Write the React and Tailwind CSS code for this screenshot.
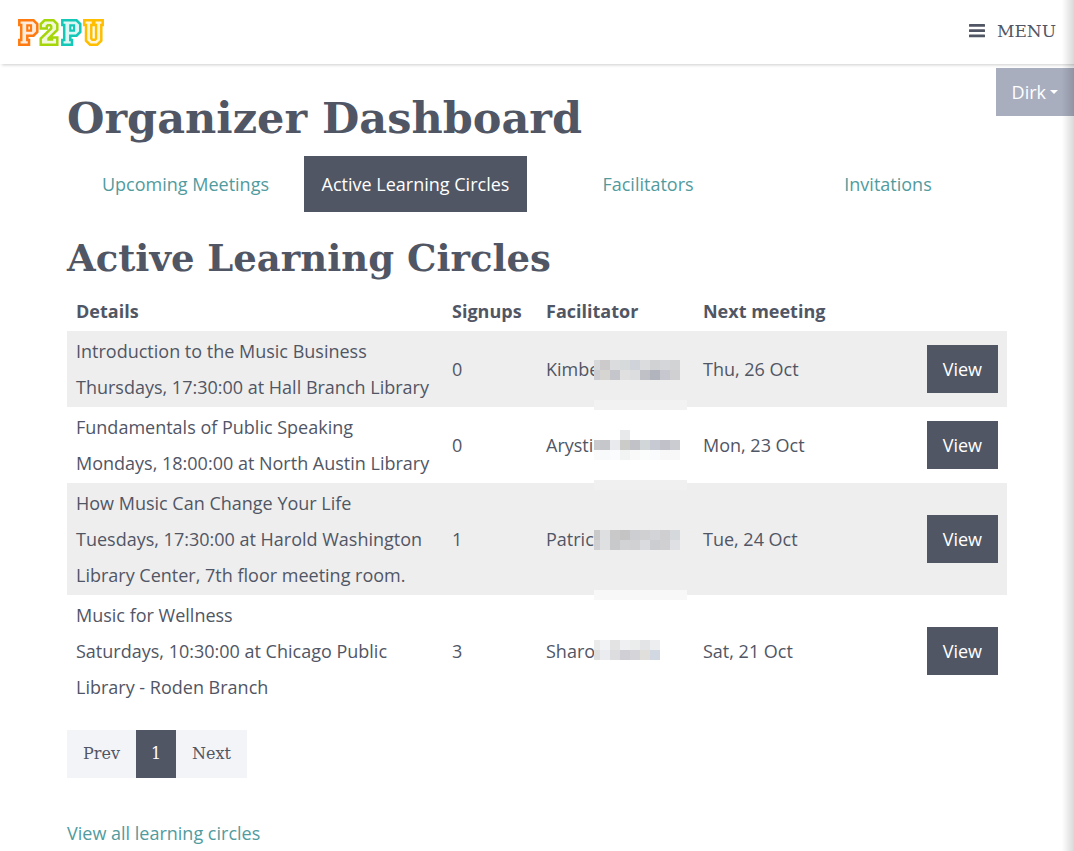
function Logo() {
  const letters = [
    { color: '#ff7a0f', d: 'M1.3 1.3H15.5L19.3 5V13L15.5 16.7H9.3V21H11V25.7H1.3V21H3.2V6H1.3Z', hole: 'M9.3 6.3V11.7H13V6.3Z' },
    { color: '#a5d60a', d: 'M22.7 9.5V5L26.5 1.3H35.5L39.3 5V11L30.5 19.5V20.5H34V18.5H39.3V25.7H22.7V19.5L33.2 9.5V7.2L32.3 6.3H29.8L28.8 7.3V9.5Z' },
    { color: '#14c8b8', d: 'M44.3 1.3H58.5L62.3 5V13L58.5 16.7H52.3V21H54V25.7H44.3V21H46.2V6H44.3Z', hole: 'M52.3 6.3V11.7H56V6.3Z' },
    { color: '#ffbe00', d: 'M66.3 1.3H75V6H73.3V19.5L74.3 20.7H77L78 19.5V6H76.3V1.3H84.7V6H83.3V21.7L79.2 25.7H72L68 21.7V6H66.3Z' },
  ];
  return (
    <svg width="86" height="27" viewBox="0 0 86 27" role="img" aria-label="P2PU">
      {letters.map((l) => (
        <g key={l.color} stroke={l.color} strokeWidth="2.5">
          <path d={l.d} fill={l.color} fillOpacity="0.15" />
          {l.hole && <path d={l.hole} fill="#fff" strokeWidth="2.2" />}
        </g>
      ))}
    </svg>
  );
}

const circles = [
  {
    title: 'Introduction to the Music Business',
    place: 'Thursdays, 17:30:00 at Hall Branch Library',
    signups: 0,
    name: 'Kimbe',
    next: 'Thu, 26 Oct',
    top: 9,
    rows: [
      ['#d7d8da', '#cccaca', '#dbdcde', '#d7dadb', '#d0d4da', '#dbdcde', '#d1d2d4', '#d5d6d9', '#d2d3d5'],
      ['#cccdd3', '#d6d5d2', '#c5c6cc', '#dfe0df', '#dcdddf', '#c0c1c7', '#b1b3bd', '#c7c8cf', '#d0d0d2'],
    ],
    strip: { y: 49, color: '#f2f2f2' },
  },
  {
    title: 'Fundamentals of Public Speaking',
    place: 'Mondays, 18:00:00 at North Austin Library',
    signups: 0,
    name: 'Arysti',
    next: 'Mon, 23 Oct',
    top: 3,
    rows: [
      [null, null, null, '#e8e9eb', null, null, null, null, null],
      ['#c9cacd', '#c6c7cb', '#e9eaed', '#cbccca', '#c1c2c8', '#d1d6d9', '#c7cad2', '#c1c2c9', '#cbccd1'],
      ['#fafafa', '#f8f9fa', '#fafcfe', '#f1f4f3', '#f9f9fa', '#fbfdfd', '#fafbfc', '#f8f8f8', '#f8f8f8'],
    ],
    strip: { y: 53, color: '#f0f0f0' },
  },
  {
    title: 'How Music Can Change Your Life',
    place: 'Tuesdays, 17:30:00 at Harold Washington Library Center, 7th floor meeting room.',
    signups: 1,
    name: 'Patric',
    next: 'Tue, 24 Oct',
    top: 9,
    rows: [
      ['#cac9ca', '#dedfe0', '#c9c9ca', '#c4c4c5', '#cdced2', '#d0d0d3', '#d3d4d8', '#cfcfd1', '#d6d9dc'],
      ['#d0d0d2', '#dfe0e2', '#c8c9cb', '#d2d3d5', '#d1d1d3', '#dadbde', '#cccdd1', '#d0d0d2', '#dfe0e4'],
    ],
    strip: { y: 69, color: '#f8f8f8' },
  },
  {
    title: 'Music for Wellness',
    place: 'Saturdays, 10:30:00 at Chicago Public Library - Roden Branch',
    signups: 3,
    name: 'Sharo',
    next: 'Sat, 21 Oct',
    top: 7,
    rows: [
      ['#ebebeb', '#f2f3f5', '#e3e3e4', '#eff0f2', '#ebecec', '#e3e4e6', '#edeef0'],
      ['#dfe0e0', '#ebecef', '#dddddf', '#d0cfd5', '#d5d5d9', '#e0dfdc', '#d1d8e1'],
    ],
  },
];

function Mosaic({ top, rows, strip }) {
  return (
    <svg className="absolute left-12 top-0" width="94" height="80" aria-hidden="true" shapeRendering="crispEdges">
      {rows.map((row, r) =>
        row.map((fill, c) =>
          fill ? (
            <rect key={`${r}-${c}`} x={c ? c * 10 - 4 : 0} y={top + r * 10} width={c ? 10 : 6} height="10" fill={fill} />
          ) : null
        )
      )}
      {strip && <rect x="0" y={strip.y} width="93" height="10" fill={strip.color} />}
    </svg>
  );
}

const tabs = ['Upcoming Meetings', 'Active Learning Circles', 'Facilitators', 'Invitations'];

export default function App() {
  return (
    <div className="min-h-screen bg-white pb-1 font-['Open_Sans',sans-serif] text-lg leading-9 text-[#515665]">
      <header className="flex h-16 items-center justify-between px-[18px] shadow-[2px_1px_3px_rgba(0,0,0,0.2)]">
        <a href="#home">
          <Logo />
        </a>
        <button type="button" className="flex items-center gap-3 pb-0.5 font-['DejaVu_Serif',serif] text-[17px]">
          <svg width="16" height="14" viewBox="0 0 16 14" fill="#515665" aria-hidden="true">
            <rect width="16" height="2.7" rx="0.5" />
            <rect y="5.3" width="16" height="2.7" rx="0.5" />
            <rect y="10.6" width="16" height="2.7" rx="0.5" />
          </svg>
          MENU
        </button>
      </header>

      <button type="button" className="absolute right-0 top-[68px] flex h-12 items-center gap-1 bg-[#a9aebf] px-4 text-white">
        Dirk
        <svg width="8" height="4" viewBox="0 0 8 4" fill="currentColor" aria-hidden="true">
          <path d="M0 0H8L4 4Z" />
        </svg>
      </button>
      <div className="pointer-events-none fixed inset-y-0 right-0 w-3 bg-linear-to-r from-transparent to-black/15" />

      <main className="px-[67px] pt-6">
        <h1 className="font-['DejaVu_Serif',serif] text-[43px] font-bold leading-[60px]">Organizer Dashboard</h1>
        <nav className="mt-2 grid grid-cols-[237fr_223fr_242fr_238fr] text-center">
          {tabs.map((t, i) => (
            <a
              key={t}
              href="#tab"
              className={i === 1 ? 'bg-[#515665] py-[10px] text-white' : 'py-[10px] text-[#519b9e]'}
            >
              {t}
            </a>
          ))}
        </nav>
        <h2 className="mt-5 font-['DejaVu_Serif',serif] text-[37px] font-bold leading-[52px]">Active Learning Circles</h2>
        <table className="mt-[7px] w-full table-fixed text-left">
          <thead>
            <tr>
              <th className="w-[40%] px-[9px] py-0.5 font-bold">Details</th>
              <th className="w-[10%] px-[9px] py-0.5 font-bold">Signups</th>
              <th className="w-[16.7%] px-[9px] py-0.5 font-bold">Facilitator</th>
              <th className="px-[9px] py-0.5 font-bold">Next meeting</th>
              <th className="w-[15%] px-[9px] py-0.5" />
            </tr>
          </thead>
          <tbody>
            {circles.map((c) => (
              <tr key={c.title} className="odd:bg-[#eeeeee]">
                <td className="px-[9px] py-0.5">
                  {c.title}
                  <br />
                  {c.place}
                </td>
                <td className="px-[9px] py-0.5">{c.signups}</td>
                <td className="px-[9px] py-0.5">
                  <div className="relative">
                    {c.name}
                    <Mosaic top={c.top} rows={c.rows} strip={c.strip} />
                  </div>
                </td>
                <td className="px-[9px] py-0.5">{c.next}</td>
                <td className="px-[9px] py-0.5 text-right">
                  <a href="#view" className="inline-block bg-[#515665] px-4 py-[6px] align-middle text-white">
                    View
                  </a>
                </td>
              </tr>
            ))}
          </tbody>
        </table>
        <div className="mt-[23px] flex font-['DejaVu_Serif',serif] text-base leading-9">
          <button type="button" className="bg-[#f3f4f8] px-4 py-[6px]">Prev</button>
          <button type="button" className="bg-[#515665] px-[15px] py-[6px] text-white">1</button>
          <button type="button" className="bg-[#f3f4f8] px-4 py-[6px]">Next</button>
        </div>
        <a href="#all" className="mt-[37px] inline-block text-[#519b9e]">View all learning circles</a>
      </main>
    </div>
  );
}
